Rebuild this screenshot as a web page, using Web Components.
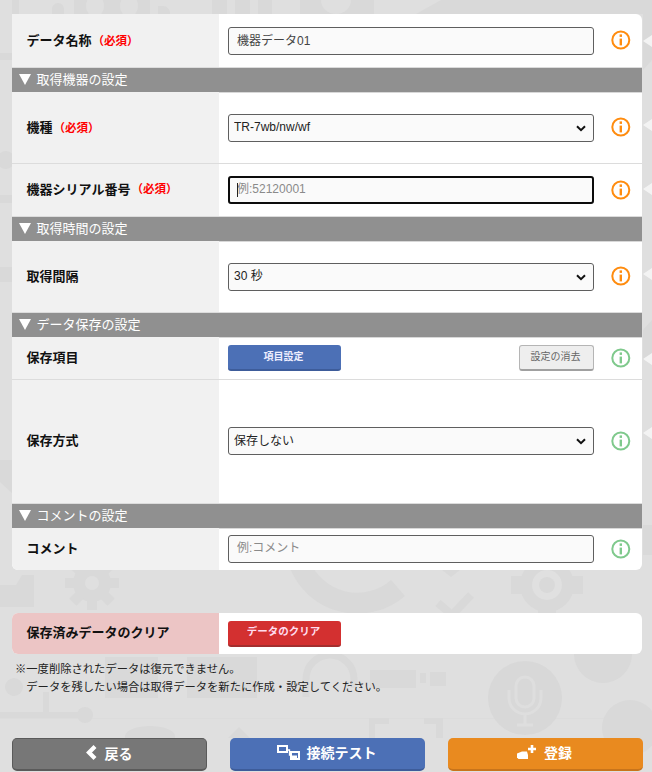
<!DOCTYPE html>
<html lang="ja">
<head>
<meta charset="utf-8">
<title>取得データ設定</title>
<style>
  html, body { margin: 0; height: 100%; }
  body {
    background: #dfdfdf;
    font-family: "Liberation Sans", "Noto Sans CJK JP", sans-serif;
    color: #111;
  }
</style>
</head>
<body>
<template id="page-backdrop-tpl">
  <style>
    :host { position: absolute; inset: 0; display: block; overflow: hidden; z-index: -1; }
    svg { display: block; }
  </style>
  <svg width="652" height="772" viewBox="0 0 652 772" fill="#d9d9d9">
    <!-- strip above the card -->
    <path d="M12 0h7v14h-7zM52 14V9a6 6 0 0 1 12 0v5z"/>
    <rect x="74" y="0" width="76" height="14"/>
    <ellipse cx="95" cy="6" rx="9" ry="11" fill="#dfdfdf"/><ellipse cx="129" cy="6" rx="9" ry="11" fill="#dfdfdf"/>
    <path d="M158 14V6h5a7 7 0 0 1 7 8z"/>
    <path d="M212 0h15v14h-15zM235 0h15v14h-15zM258 0h14v14h-14z"/>
    <rect x="300" y="0" width="74" height="14"/>
    <ellipse cx="336" cy="0" rx="15" ry="14" fill="#dfdfdf"/>
    <path d="M416 14 441 0h211v14z"/>
    <!-- left margin -->
    <path d="M0 53h12v7H0zM0 195h12v8H0zM0 267h12v15H0zM0 460h12v33L0 482z"/>
    <circle cx="6" cy="160" r="9"/>
    <!-- right margin -->
    <path d="M643 0h9v60l-9 10zM643 330l9-10v40h-9zM643 525h9v30h-9z"/>
    <!-- gear left of the clear card -->
    <path d="M0 585h16l6-10h12v32H0z"/>
    <g transform="translate(92 583)">
      <circle r="19"/><circle r="7" fill="#dfdfdf"/>
      <g><path d="M-5-27H5v10H-5zM-5 17H5v10H-5zM-27-5h10V5h-10zM17-5h10V5H17z"/>
      <path transform="rotate(45)" d="M-5-27H5v10H-5zM-5 17H5v10H-5zM-27-5h10V5h-10zM17-5h10V5H17z"/></g>
    </g>
    <!-- arc and check -->
    <path d="M300 565A62 62 0 0 0 398 588" fill="none" stroke="#d9d9d9" stroke-width="21"/>
    <path d="M451 577l-9-7h18z"/>
    <path d="M438 603l14 12 19-20" fill="none" stroke="#d9d9d9" stroke-width="8"/>
    <!-- gear under the card -->
    <g transform="translate(547 585)">
      <circle r="27"/><circle r="15" fill="#e0e0e0"/><circle r="8"/>
      <path d="M-9-36H9v14H-9zM-9 22H9v14H-9zM-36-9h14V9h-14zM22-9h14V9H22z"/>
    </g>
    <!-- circuit lines -->
    <rect x="0" y="718" width="652" height="1" fill="#dcdcdc"/>
    <path d="M0 715h80M46 692v23" stroke="#d9d9d9" stroke-width="6" fill="none"/>
    <circle cx="85" cy="715" r="8"/><circle cx="14" cy="687" r="9"/>
    <path d="M125 738v-2a25 10 0 0 1 50 0v2zM228 738l11-11 11 11z"/>
    <rect x="105" y="657" width="53" height="41"/><rect x="187" y="657" width="70" height="41"/>
    <path d="M306 697v-18a24 24 0 0 1 48 0v9" fill="none" stroke="#d9d9d9" stroke-width="7"/>
    <rect x="370" y="670" width="46" height="18"/><rect x="420" y="673" width="6" height="10"/>
    <rect x="430" y="672" width="16" height="14"/>
    <path d="M369 738v-20h20v6h-14v14zM424 718h19v20h-7v-14h-12z"/>
    <!-- microphone -->
    <circle cx="525" cy="698" r="37" fill="#d8d8d8"/>
    <g fill="none" stroke="#dedede" stroke-width="3">
      <rect x="516" y="677" width="18" height="30" rx="9"/>
      <path d="M509 690v8a16 16 0 0 0 32 0v-8M525 714v10M517 725h16"/>
    </g>
    <!-- right side -->
    <path d="M574 654h58a29 29 0 0 1-58 0z"/>
    <circle cx="630" cy="728" r="28"/>
  </svg>
</template>

<template id="form-card-tpl">
  <style>
    :host { display: block; background: #fff; border-radius: 6px; }
    ::slotted(:first-child) { border-top-left-radius: 6px; border-top-right-radius: 6px; }
  </style>
  <slot></slot>
</template>

<template id="form-row-tpl">
  <style>
    :host { display: grid; grid-template-columns: 207px 1fr; position: relative; box-sizing: border-box; border-bottom: 1px solid #dcdcdc; }
    :host([last]) { border-bottom: 0; }
    :host([notch])::after {
      content: ""; position: absolute; right: -10px; top: var(--notch-y, 20px); margin-top: -6px;
      border: 6px solid transparent; border-left: 0; border-right: 9px solid #f3f3f3;
    }
    .label {
      background: #f1f1f1; display: flex; align-items: center; padding: 0 0 var(--label-pad, 2px) 14.6px;
      font-size: 13px; font-weight: bold; color: #111;
      border-radius: var(--label-radius, 0);
    }
    .req { color: #f00; font-size: 11.5px; margin-left: 1px; }
    .body { display: flex; align-items: center; padding: 0 0 var(--body-pad, 0) 9px; }
    .control { flex: 0 0 366px; display: flex; justify-content: space-between; }
    .tip { margin-left: 17px; display: flex; }
  </style>
  <div class="label"><span id="name"></span><span class="req" id="req" hidden></span></div>
  <div class="body">
    <div class="control"><slot></slot></div>
    <div class="tip"><slot name="tip"></slot></div>
  </div>
</template>

<template id="section-head-tpl">
  <style>
    :host { display: block; background: #909090; color: #fff; font-size: 13px; line-height: 23px; height: 24px; padding-left: 7px; box-shadow: 0 1px 0 #d8d8d8; }
    .tri { display: inline-block; width: 0; height: 0; border: 6.5px solid transparent; border-top: 11px solid #fff; border-bottom: 0; margin: 0 5.500px 0 0; vertical-align: -1px; }
  </style>
  <span class="tri"></span><slot></slot>
</template>

<template id="info-mark-tpl">
  <style>
    :host { display: block; width: 20px; height: 20px; margin-top: -1px; color: #ff8c0f; }
    :host([soft]) { color: #7fc98c; }
    svg { display: block; }
  </style>
  <svg width="20" height="20" viewBox="0 0 20 20" fill="none">
    <circle cx="9.800" cy="10" r="8.500" stroke="currentColor" stroke-width="2"/>
    <rect x="8.600" y="8.600" width="2.400" height="6.800" fill="currentColor"/>
    <rect x="8.600" y="4.400" width="2.400" height="2.500" fill="currentColor"/>
  </svg>
</template>

<template id="text-field-tpl">
  <style>
    :host { display: block; width: 366px; position: relative; }
    input {
      box-sizing: border-box; width: 100%; height: 28px; margin: 0; padding: 0 8px 2px;
      background: #fafafa; border: 1px solid #5f5f5f; border-radius: 3px; outline: 0;
      font: 12px "Liberation Sans", "Noto Sans CJK JP", sans-serif; color: #444;
    }
    input::placeholder { color: #8a8a8a; opacity: 1; }
    :host([active]) input { border: 2px solid #0c0c0c; padding: 0 7px 2px; }
    :host([active])::after { content: ""; position: absolute; left: 9px; top: 7px; width: 1px; height: 14px; background: #222; }
  </style>
  <input type="text">
</template>

<template id="select-field-tpl">
  <style>
    :host { display: block; width: 366px; position: relative; }
    select {
      display: block; appearance: none; box-sizing: border-box; width: 100%; height: 28px; margin: 0; padding: 0 20px 1px 5px;
      background: #fafafa; border: 1px solid #5f5f5f; border-radius: 3px; outline: 0;
      font: 12px "Liberation Sans", "Noto Sans CJK JP", sans-serif; color: #222;
    }
    svg { position: absolute; right: 8px; top: 11px; pointer-events: none; }
  </style>
  <select></select>
  <svg width="10" height="7" viewBox="0 0 10 7"><path d="M1 1.200 5 5.200 9 1.200" fill="none" stroke="#111" stroke-width="2"/></svg>
</template>

<template id="small-button-tpl">
  <style>
    :host { display: block; }
    button {
      display: block; box-sizing: border-box; width: var(--w, 113px); height: 26px; padding: 0 2px 4px 0; margin: 0;
      border: 0; border-bottom: 2px solid #3d5c9a; border-radius: 3px;
      background: #4c70b6; color: #eef; font: bold 10px "Liberation Sans", "Noto Sans CJK JP", sans-serif;
    }
    :host([tone=red]) button { background: #d33030; border-bottom-color: #a32e2e; font-size: 10.5px; color: #fde; }
    :host([tone=plain]) button { background: #eee; color: #666; border: 1px solid #b5b5b5; border-bottom: 2px solid #a0a0a0; font-weight: normal; }
  </style>
  <button><slot></slot></button>
</template>

<template id="big-button-tpl">
  <style>
    :host { display: block; width: 195px; }
    button {
      display: flex; align-items: center; justify-content: center; gap: var(--gap, 7px);
      box-sizing: border-box; width: 100%; height: 33px; padding: 0 2px 3px 0; margin: 0;
      border: 0; border-bottom: 2px solid #3d5c9a; border-radius: 5px;
      background: #4c70b6; color: #fff; font: bold 14px "Liberation Sans", "Noto Sans CJK JP", sans-serif;
    }
    :host([tone=grey]) button { background: #777; border: 1px solid #5a5a5a; border-bottom-width: 2px; }
    :host([tone=orange]) button { background: #e98a1f; border-bottom-color: #c8741b; }
    ::slotted(svg) { display: block; }
  </style>
  <button><slot name="icon"></slot><slot></slot></button>
</template>

<page-backdrop></page-backdrop>

<main style="padding:14px 9px 0 12px;height:771px;box-sizing:border-box;display:flex;flex-direction:column">
  <form-card style="margin-right:1px">
    <form-row label="データ名称" required notch style="height:54px;--notch-y:27px">
      <text-field value="機器データ01"></text-field>
      <info-mark slot="tip"></info-mark>
    </form-row>
    <section-head>取得機器の設定</section-head>
    <form-row label="機種" required notch style="height:72px;--notch-y:33px">
      <select-field value="TR-7wb/nw/wf"></select-field>
      <info-mark slot="tip"></info-mark>
    </form-row>
    <form-row label="機器シリアル番号" required notch style="height:53px;--notch-y:25px;--label-pad:4px">
      <text-field placeholder="例:52120001" active></text-field>
      <info-mark slot="tip"></info-mark>
    </form-row>
    <section-head>取得時間の設定</section-head>
    <form-row label="取得間隔" notch style="height:72px;--notch-y:33px">
      <select-field value="30 秒"></select-field>
      <info-mark slot="tip"></info-mark>
    </form-row>
    <section-head>データ保存の設定</section-head>
    <form-row label="保存項目" notch style="height:43px;--notch-y:22px;--label-pad:4px">
      <small-button>項目設定</small-button>
      <small-button tone="plain" style="--w:75px">設定の消去</small-button>
      <info-mark slot="tip" soft></info-mark>
    </form-row>
    <form-row label="保存方式" notch style="height:124px;--notch-y:53px;--body-pad:1px;--label-pad:4px">
      <select-field value="保存しない"></select-field>
      <info-mark slot="tip" soft></info-mark>
    </form-row>
    <section-head>コメントの設定</section-head>
    <form-row label="コメント" last style="height:42px;--label-radius:0 0 0 6px;--label-pad:4px">
      <text-field placeholder="例:コメント"></text-field>
      <info-mark slot="tip" soft></info-mark>
    </form-row>
  </form-card>

  <form-card style="margin:43px 1px 0 0">
    <form-row label="保存済みデータのクリア" last style="height:41px;--label-bg:#ecc5c5;--label-pad:4px">
      <small-button tone="red">データのクリア</small-button>
    </form-row>
  </form-card>

  <notice-text style="margin-top:6px">
    <span>※一度削除されたデータは復元できません。</span>
    <span>　データを残したい場合は取得データを新たに作成・設定してください。</span>
  </notice-text>

  <action-bar style="margin-top:auto">
    <big-button tone="grey">
      <svg slot="icon" width="13" height="15" viewBox="0 0 13 15"><path d="M10 1.500 4 7.500l6 6" fill="none" stroke="#fff" stroke-width="4.200"/></svg>
      戻る
    </big-button>
    <big-button>
      <svg slot="icon" width="23" height="15" viewBox="0 0 23 15" fill="none" stroke="#fff" stroke-width="2">
        <rect x="1" y="1" width="9" height="6"/><rect x="14" y="7" width="8" height="7"/>
        <path d="M14 12h6" stroke-width="3"/><path d="M10 5h2.500v5H14" stroke-width="1.300"/>
      </svg>
      接続テスト
    </big-button>
    <big-button tone="orange" style="--gap:8px">
      <svg slot="icon" width="19" height="15" viewBox="0 0 19 15" fill="#fff">
        <path d="M0 8.500 5 6.500H10L11 10V14H1.500L0 12.500z"/>
        <path d="M13.700 0h2.600v2.700H19v2.600h-2.700V8h-2.600V5.300H11V2.700h2.700z"/>
      </svg>
      登録
    </big-button>
  </action-bar>
</main>

<script>
  // every element clones its template into an open shadow root
  class TemplateElement extends HTMLElement {
    constructor() {
      super();
      this.attachShadow({ mode: 'open' });
      const tpl = document.getElementById(this.constructor.tpl);
      this.shadowRoot.appendChild(tpl.content.cloneNode(true));
    }
  }

  class PageBackdrop extends TemplateElement { static tpl = 'page-backdrop-tpl'; }
  class FormCard extends TemplateElement { static tpl = 'form-card-tpl'; }
  class SectionHead extends TemplateElement { static tpl = 'section-head-tpl'; }
  class InfoMark extends TemplateElement { static tpl = 'info-mark-tpl'; }
  class SmallButton extends TemplateElement { static tpl = 'small-button-tpl'; }
  class BigButton extends TemplateElement { static tpl = 'big-button-tpl'; }

  class FormRow extends TemplateElement {
    static tpl = 'form-row-tpl';
    connectedCallback() {
      this.shadowRoot.getElementById('name').textContent = this.getAttribute('label');
      const req = this.shadowRoot.getElementById('req');
      if (this.hasAttribute('required')) {
        req.hidden = false;
        req.textContent = '（必須）';
      }
      const bg = this.style.getPropertyValue('--label-bg');
      if (bg) {
        const label = this.shadowRoot.querySelector('.label');
        label.style.background = bg;
        label.style.borderRadius = '6px 0 0 6px';
      }
    }
  }

  class TextField extends TemplateElement {
    static tpl = 'text-field-tpl';
    connectedCallback() {
      const input = this.shadowRoot.querySelector('input');
      input.value = this.getAttribute('value') || '';
      input.placeholder = this.getAttribute('placeholder') || '';
    }
  }

  class SelectField extends TemplateElement {
    static tpl = 'select-field-tpl';
    connectedCallback() {
      const opt = document.createElement('option');
      opt.textContent = this.getAttribute('value');
      this.shadowRoot.querySelector('select').appendChild(opt);
    }
  }

  class NoticeText extends HTMLElement {
    constructor() {
      super();
      this.attachShadow({ mode: 'open' }).innerHTML = `
        <style>
          :host { display: flex; flex-direction: column; padding-left: 3px; font-size: 11.3px; line-height: 18px; color: #222; }
        </style>
        <slot></slot>`;
    }
  }

  class ActionBar extends HTMLElement {
    constructor() {
      super();
      this.attachShadow({ mode: 'open' }).innerHTML = `
        <style>
          :host { display: flex; justify-content: space-between; width: 631px; }
        </style>
        <slot></slot>`;
    }
  }

  customElements.define('page-backdrop', PageBackdrop);
  customElements.define('form-card', FormCard);
  customElements.define('form-row', FormRow);
  customElements.define('section-head', SectionHead);
  customElements.define('info-mark', InfoMark);
  customElements.define('text-field', TextField);
  customElements.define('select-field', SelectField);
  customElements.define('small-button', SmallButton);
  customElements.define('big-button', BigButton);
  customElements.define('notice-text', NoticeText);
  customElements.define('action-bar', ActionBar);
</script>
</body>
</html>
